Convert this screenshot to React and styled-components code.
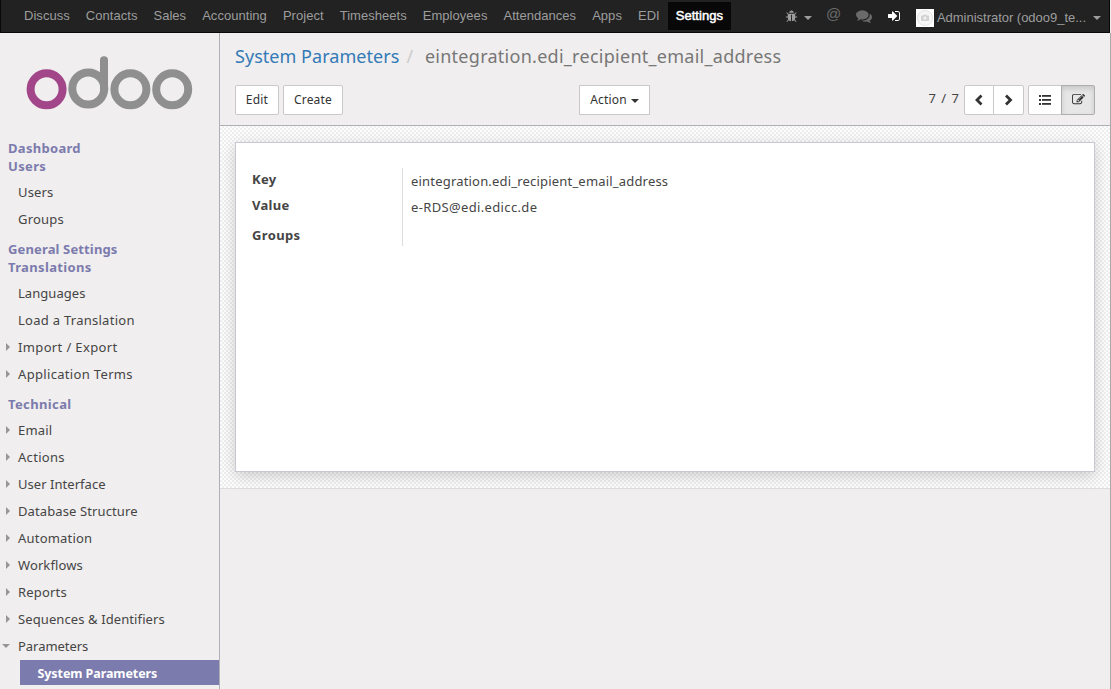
import React from 'react';
import styled, { createGlobalStyle, css } from 'styled-components';

const Global = createGlobalStyle`
  * { box-sizing: border-box; }
  body { margin: 0; background: #f0eeee; overflow: hidden; }
`;

const lucida = '"Noto Sans", "Open Sans", sans-serif';
const helvetica = '"Liberation Sans", Arial, sans-serif';

const Window = styled.div`
  width: 1111px;
  height: 689px;
  display: flex;
  flex-direction: column;
  overflow: hidden;
  font: 13px/18px ${lucida};
  color: #454545;
`;

const Navbar = styled.nav`
  display: flex;
  flex: none;
  height: 33px;
  width: 1110px;
  padding: 2px 0 0 15px;
  background: #222;
  border: 1px solid #080808;
  border-top-width: 0;
  color: #9d9d9d;
  font: 13px/28px ${helvetica};
  letter-spacing: 0.04px;
`;

const NavItem = styled.a`
  height: 28px;
  padding: 0 8px;
  white-space: nowrap;
  ${(p) =>
    p.$active &&
    css`
      background: #080808;
      color: #fff;
      -webkit-text-stroke: 0.5px #fff;
    `}
`;

const Systray = styled.div`
  display: flex;
  align-items: center;
  height: 28px;
  margin: 0 8px 0 auto;
`;

const TrayIcon = styled.span`
  display: flex;
  align-items: center;
  height: 28px;
  margin-right: ${(p) => p.$gap}px;
  color: ${(p) => p.$color || '#9d9d9d'};
`;

const At = styled.span`
  font-size: 15px;
  line-height: 24px;
  height: 28px;
  width: 15px;
  margin-right: 15px;
  color: #6a6a6a;
`;

const Avatar = styled.svg`
  margin: 3px 3px 0 0;
`;

const UserName = styled.span`
  letter-spacing: -0.02px;
  padding-top: 3px;
  margin-right: 7px;
`;

const Caret = styled.span`
  width: 0;
  height: 0;
  border: 4px solid transparent;
  border-top-color: currentColor;
  border-bottom: 0;
  margin-top: ${(p) => p.$top || 0}px;
`;

const Body = styled.div`
  display: flex;
  flex: 1;
  min-height: 0;
`;

const Sidebar = styled.aside`
  width: 220px;
  flex: none;
  background: #f0eeee;
  border-right: 1px solid #afafb6;
  overflow: hidden;
`;

const Logo = styled.svg`
  display: block;
  margin: 20px 0 0 22px;
`;

const Sections = styled.div`
  padding-top: 22px;
`;

const Heading = styled.div`
  height: 18px;
  padding-left: 8px;
  font-weight: bold;
  color: #7c7bad;
  letter-spacing: ${(p) => p.$track}px;
`;

const Menu = styled.div`
  padding: 3px 0 8px;
`;

const MenuItem = styled.div`
  display: flex;
  align-items: center;
  height: 27px;
  letter-spacing: ${(p) => p.$track}px;
  white-space: nowrap;
`;

const Arrow = styled.span`
  width: 18px;
  flex: none;
  display: flex;
  padding-left: ${(p) => (p.$state === 'open' ? 2 : 6)}px;
  &::before {
    content: '';
    border: 4px solid transparent;
    ${(p) =>
      p.$state === 'open' && 'border-top-color: #969696; border-bottom: 0;'}
    ${(p) =>
      p.$state === 'closed' && 'border-left-color: #969696; border-right: 0;'}
  }
`;

const ActiveItem = styled.div`
  height: 25px;
  margin: 1px 0 0 20px;
  padding-left: 17.5px;
  background: #7c7bad;
  color: #fff;
  font-size: 12.5px;
  font-weight: bold;
  line-height: 28px;
  letter-spacing: -0.08px;
`;

const Main = styled.main`
  flex: 1;
  display: flex;
  flex-direction: column;
  border-right: 1px solid #a9a9ab;
`;

const ControlPanel = styled.header`
  height: 93px;
  padding: 11px 15px 0;
  border-bottom: 1px solid #afafb6;
`;

const Breadcrumb = styled.div`
  display: flex;
  height: 25px;
  font-size: 18px;
  line-height: 25px;
  color: #777;
  letter-spacing: 0.27px;
`;

const Crumb = styled.a`
  color: #337ab7;
  letter-spacing: 0.04px;
`;

const Slash = styled.span`
  color: #ccc;
  width: 25.5px;
  padding-left: 7px;
`;

const Toolbar = styled.div`
  display: flex;
  margin-top: 16px;
`;

const Button = styled.button`
  display: flex;
  align-items: center;
  justify-content: center;
  width: ${(p) => p.$width}px;
  height: 30px;
  margin: 0 4px 0 0;
  padding: 0 0 1px;
  background: #fff;
  border: 1px solid #c9c9c9;
  border-radius: ${(p) => (p.$square ? 0 : 2)}px;
  color: #333;
  font: 12px/18px ${lucida};
  letter-spacing: 0.2px;
  gap: 4px;
`;

const Actions = styled.div`
  margin-left: 232px;
`;

const Pager = styled.div`
  display: flex;
  margin-left: auto;
`;

const Count = styled.span`
  line-height: 27px;
  letter-spacing: 1px;
  margin-right: 4px;
`;

const Group = styled.div`
  display: flex;
  margin-left: ${(p) => p.$left || 0}px;
`;

const GroupButton = styled(Button)`
  margin: 0 0 0 ${(p) => (p.$last ? -1 : 0)}px;
  border-radius: ${(p) => (p.$last ? '0 2px 2px 0' : '2px 0 0 2px')};
  ${(p) =>
    p.$pressed &&
    css`
      background: #e6e6e6;
      border-color: #adadad;
      box-shadow: inset 0 3px 5px rgba(0, 0, 0, 0.125);
    `}
`;

const SheetArea = styled.section`
  height: 363px;
  padding: 16px 15px;
  border-bottom: 1px solid #ddd;
  background: repeating-conic-gradient(#eee 0 25%, #fdfdfd 0 50%) 0 0 / 4px 4px;
`;

const Sheet = styled.div`
  height: 330px;
  padding: 25px 16px;
  background: #fff;
  border: 1px solid #c8c8d3;
  box-shadow: 0 4px 14px rgba(0, 0, 0, 0.18);
`;

const Fields = styled.div`
  display: grid;
  grid-template-columns: 150px 1fr;
  grid-auto-rows: 26px;
`;

const Label = styled.div`
  padding-top: ${(p) => p.$top}px;
  font-weight: bold;
  letter-spacing: ${(p) => p.$track}px;
`;

const Value = styled.div`
  border-left: 1px solid #ddd;
  padding: 4px 0 0 8px;
  letter-spacing: ${(p) => p.$track || 0}px;
`;

const glyphs = {
  bug: 'M1696 960q0 26-19 45t-45 19h-224q0 171-67 290l208 209q19 19 19 45t-19 45q-18 19-45 19t-45-19l-198-197q-5 5-15 13t-42 28.500-65 36.500-82 29-97 13v-896h-128v896q-51 0-101.500-13.500t-87-33-66-39-43.500-32.500l-15-14-183 207q-20 21-48 21-24 0-43-16-19-18-20.500-44.500t15.500-46.500l202-227q-58-114-58-274h-224q-26 0-45-19t-19-45 19-45 45-19h224v-294l-173-173q-19-19-19-45t19-45 45-19 45 19l173 173h844l173-173q19-19 45-19t45 19 19 45-19 45l-173 173v294h224q26 0 45 19t19 45zm-480-576h-640q0-133 93.500-226.500t226.500-93.500 226.500 93.500 93.500 226.500z',
  comments:
    'M1408 768q0 139-94 257t-256.500 186.500-353.500 68.500q-86 0-176-16-124 88-278 128-36 9-86 16h-3q-11 0-20.500-8t-11.500-21q-1-3-1-6.500t.5-6.500 2-6l2.500-5 3.500-5.500 4-5 4.500-5 4-4.500q5-6 23-25t26-29.500 22.500-29 25-38.500 20.500-44q-124-72-195-177t-71-224q0-139 94-257t256.500-186.500 353.500-68.500 353.500 68.500 256.500 186.500 94 257zm384 256q0 120-71 224.500t-195 176.500q10 24 20.500 44t25 38.500 22.500 29 26 29.500 23 25q1 1 4 4.500t4.500 5 4 5 3.500 5.500l2.500 5 2 6 .5 6.500-1 6.500q-3 14-13 22t-22 7q-50-7-86-16-154-40-278-128-90 16-176 16-271 0-472-132 58 4 88 4 161 0 309-45t264-129q125-92 192-212t67-254q0-77-23-152 129 71 204 178t75 230z',
  signIn:
    'M1312 896q0 26-19 45l-544 544q-19 19-45 19t-45-19-19-45v-288h-448q-26 0-45-19t-19-45v-384q0-26 19-45t45-19h448v-288q0-26 19-45t45-19 45 19l544 544q19 19 19 45zm352-352v704q0 119-84.500 203.500t-203.500 84.500h-320q-13 0-22.500-9.500t-9.500-22.500q0-4-1-20t-.5-26.500 3-23.500 10-19.500 20.500-6.500h320q66 0 113-47t47-113v-704q0-66-47-113t-113-47h-312l-11.500-1-11.500-3-8-5.500-7-9-2-13.500q0-4-1-20t-.5-26.500 3-23.500 10-19.500 20.500-6.500h320q119 0 203.500 84.500t84.500 203.500z',
  edit: 'M888 1184l116-116-152-152-116 116v56h96v96h56zm440-720q-16-16-33 1l-350 350q-17 17-1 33t33-1l350-350q17-17 1-33zm80 594v190q0 119-84.500 203.500t-203.500 84.500h-832q-119 0-203.500-84.500t-84.500-203.500v-832q0-119 84.500-203.500t203.500-84.500h832q63 0 117 25 15 7 18 23 3 17-9 29l-49 49q-14 14-32 8-23-6-45-6h-832q-66 0-113 47t-47 113v832q0 66 47 113t113 47h832q66 0 113-47t47-113v-126q0-13 9-22l64-64q15-15 35-7t20 29zm-96-738l288 288-672 672h-288v-288zm444 132l-92 92-288-288 92-92q28-28 68-28t68 28l152 152q28 28 28 68t-28 68z',
};

const Icon = ({ name, size }) => (
  <svg width={size} height={size} viewBox="0 0 1792 1792" fill="currentColor">
    <path d={glyphs[name]} />
  </svg>
);

const Chevron = ({ d }) => (
  <svg width="12" height="12" viewBox="0 0 12 12" fill="none" stroke="#333" strokeWidth="2.8">
    <path d={d} />
  </svg>
);

const ListIcon = () => (
  <svg width="12" height="10" viewBox="0 0 12 10" fill="#333">
    {[0, 4, 8].map((y) => (
      <g key={y}>
        <rect x="0" y={y} width="2" height="2" />
        <rect x="3" y={y} width="9" height="1.8" />
      </g>
    ))}
  </svg>
);

const apps = ['Discuss', 'Contacts', 'Sales', 'Accounting', 'Project', 'Timesheets', 'Employees', 'Attendances', 'Apps', 'EDI', 'Settings'];

const sections = [
  {
    headings: [['Dashboard', 0.3], ['Users', 0.35]],
    items: [['Users', 0.15], ['Groups', 0.2]],
  },
  {
    headings: [['General Settings', 0.14], ['Translations', 0.35]],
    items: [
      ['Languages', 0.05],
      ['Load a Translation', 0.27],
      ['Import / Export', 0.36, 'closed'],
      ['Application Terms', 0.33, 'closed'],
    ],
  },
  {
    headings: [['Technical', 0.37]],
    items: [
      ['Email', 0.2, 'closed'],
      ['Actions', 0.3, 'closed'],
      ['User Interface', 0.04, 'closed'],
      ['Database Structure', 0.11, 'closed'],
      ['Automation', 0.2, 'closed'],
      ['Workflows', 0.1, 'closed'],
      ['Reports', 0.18, 'closed'],
      ['Sequences & Identifiers', 0.1, 'closed'],
      ['Parameters', -0.04, 'open'],
    ],
    active: 'System Parameters',
  },
];

export default function App() {
  return (
    <Window>
      <Global />
      <Navbar>
        {apps.map((name) => (
          <NavItem key={name} $active={name === 'Settings'}>{name}</NavItem>
        ))}
        <Systray>
          <TrayIcon $gap={6}><Icon name="bug" size={13} /></TrayIcon>
          <TrayIcon $gap={14}><Caret $top={3} /></TrayIcon>
          <At>@</At>
          <TrayIcon $gap={15} $color="#6a6a6a"><Icon name="comments" size={16} /></TrayIcon>
          <TrayIcon $gap={15} $color="#fff"><Icon name="signIn" size={14} /></TrayIcon>
          <Avatar width="18" height="18" viewBox="0 0 18 18">
            <rect width="18" height="18" fill="#fff" />
            <circle cx="9" cy="9" r="7.500" fill="#f6f6f6" stroke="#e4e4e4" />
            <path d="M5 6.500h2l1-1h2l1 1h2v5.500H5z" fill="#d2d2d2" />
            <circle cx="9" cy="9" r="1.600" fill="#f2f2f2" />
          </Avatar>
          <UserName>Administrator (odoo9_te...</UserName>
          <Caret $top={3} />
        </Systray>
      </Navbar>
      <Body>
        <Sidebar>
          <Logo width="176" height="64" viewBox="22 53 176 64" fill="none" strokeWidth="8">
            <circle cx="46.600" cy="89.300" r="16" stroke="#a24689" />
            <g stroke="#8f8f8f">
              <circle cx="88.300" cy="88.500" r="16" />
              <path d="M104 89V60.200" strokeLinecap="round" />
              <circle cx="130.400" cy="89.300" r="16" />
              <circle cx="172.200" cy="89.300" r="16" />
            </g>
          </Logo>
          <Sections>
            {sections.map((s) => (
              <React.Fragment key={s.headings[0][0]}>
                {s.headings.map(([t, track]) => (
                  <Heading key={t} $track={track}>{t}</Heading>
                ))}
                <Menu>
                  {s.items.map(([t, track, state]) => (
                    <MenuItem key={t} $track={track}>
                      <Arrow $state={state} />
                      {t}
                    </MenuItem>
                  ))}
                  {s.active && <ActiveItem>{s.active}</ActiveItem>}
                </Menu>
              </React.Fragment>
            ))}
          </Sections>
        </Sidebar>
        <Main>
          <ControlPanel>
            <Breadcrumb>
              <Crumb>System Parameters</Crumb>
              <Slash>/</Slash>
              <span>eintegration.edi_recipient_email_address</span>
            </Breadcrumb>
            <Toolbar>
              <Button $width={44}>Edit</Button>
              <Button $width={60}>Create</Button>
              <Actions>
                <Button $width={71} $square>Action<Caret $top={2} /></Button>
              </Actions>
              <Pager>
                <Count>7 / 7</Count>
                <Group>
                  <GroupButton $width={30}><Chevron d="M8.500 1.500L4 6l4.500 4.500" /></GroupButton>
                  <GroupButton $width={31} $last><Chevron d="M3 1.500L7.500 6 3 10.500" /></GroupButton>
                </Group>
                <Group $left={4}>
                  <GroupButton $width={34}><ListIcon /></GroupButton>
                  <GroupButton $width={34} $last $pressed><Icon name="edit" size={13} /></GroupButton>
                </Group>
              </Pager>
            </Toolbar>
          </ControlPanel>
          <SheetArea>
            <Sheet>
              <Fields>
                <Label $top={2} $track={0.3}>Key</Label>
                <Value $track={0.19}>eintegration.edi_recipient_email_address</Value>
                <Label $top={2} $track={0.3}>Value</Label>
                <Value $track={0.35}>e-RDS@edi.edicc.de</Value>
                <Label $top={6} $track={0.35}>Groups</Label>
                <Value />
              </Fields>
            </Sheet>
          </SheetArea>
        </Main>
      </Body>
    </Window>
  );
}
